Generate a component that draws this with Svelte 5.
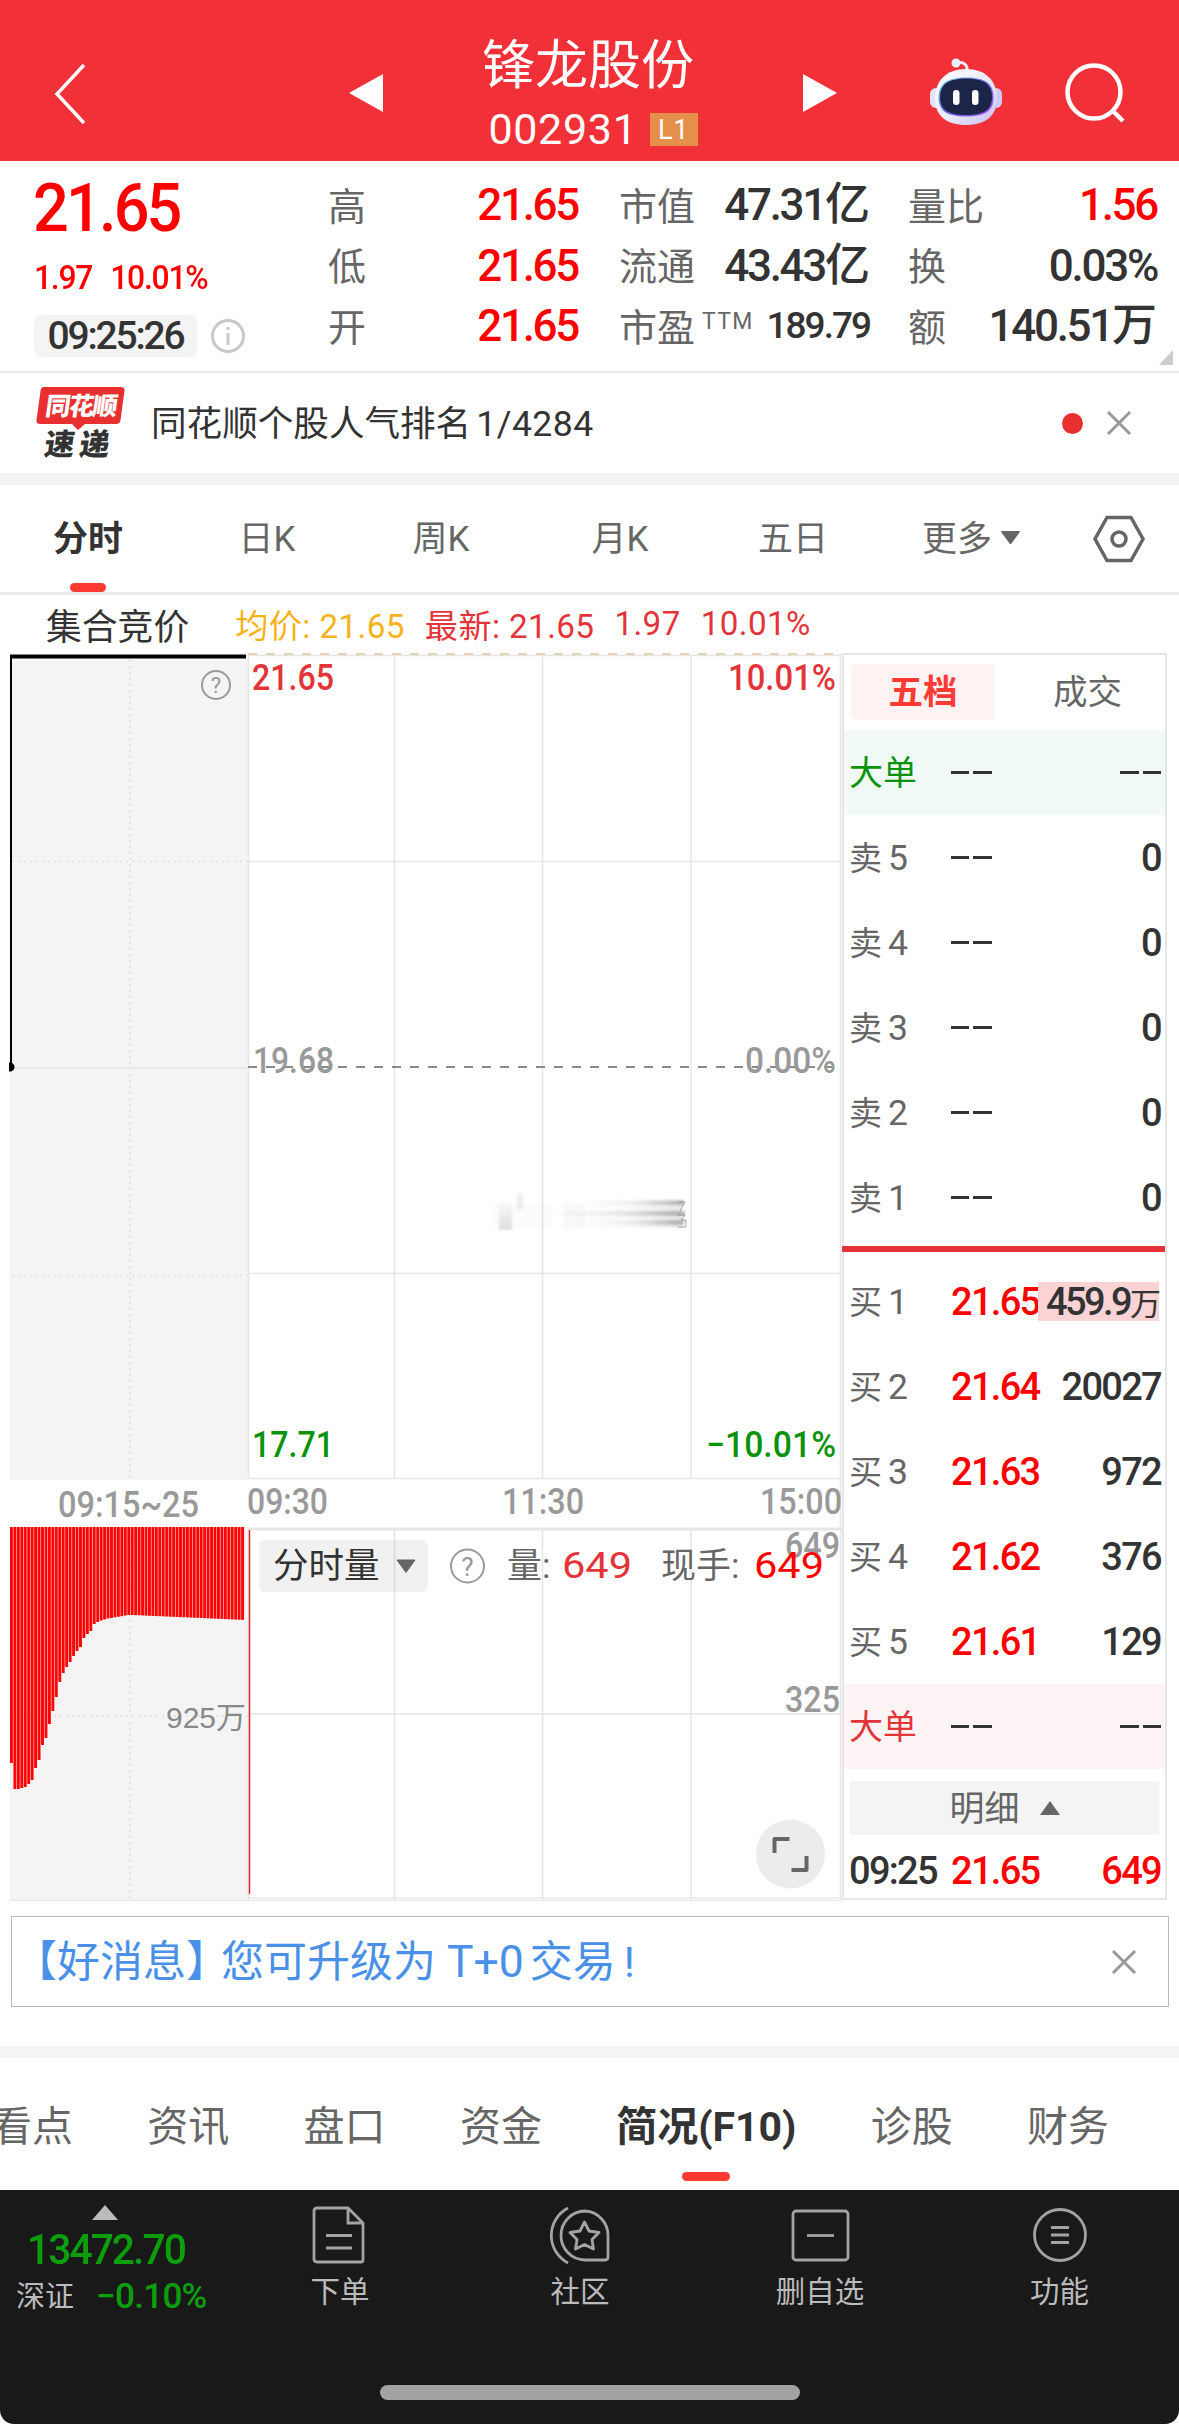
<script lang="ts">
  const stats = [
    [
      { label: '高', value: '21.65', tone: 'up' },
      { label: '低', value: '21.65', tone: 'up' },
      { label: '开', value: '21.65', tone: 'up' }
    ],
    [
      { label: '市值', value: '47.31', unit: '亿' },
      { label: '流通', value: '43.43', unit: '亿' },
      { label: '市盈', sup: 'TTM', value: '189.79', tone: 'small' }
    ],
    [
      { label: '量比', value: '1.56', tone: 'up' },
      { label: '换', value: '0.03%' },
      { label: '额', value: '140.51', unit: '万' }
    ]
  ];

  const periods = ['分时', '日K', '周K', '月K', '五日'];
  let period = $state('分时');

  const asks = [5, 4, 3, 2, 1];
  const bids = [
    { n: 1, price: '21.65', vol: '459.9', unit: '万' },
    { n: 2, price: '21.64', vol: '20027' },
    { n: 3, price: '21.63', vol: '972' },
    { n: 4, price: '21.62', vol: '376' },
    { n: 5, price: '21.61', vol: '129' }
  ];

  const sections = ['看点', '资讯', '盘口', '资金', '简况(F10)', '诊股', '财务'];
  let section = $state('简况(F10)');

  // call auction volume, one bar per sample, hanging from the top edge
  const ramp = [
    236, 262, 262, 261, 260, 257, 253, 241, 233, 218, 211, 197, 184, 170, 155, 146, 140, 135, 129,
    124, 120, 111, 107, 104, 97, 95, 93.5, 92.5, 91.5, 91, 90.3, 89.7, 89.2, 88.5, 88
  ];
  const auction = Array.from({ length: 68 }, (_, i) =>
    i < ramp.length ? ramp[i] : 88 + ((i - ramp.length) * 5) / 33
  );
</script>

{#snippet label(x: number, y: number, width: number, text: string, cls = '')}
  <text class={cls} {x} {y} textLength={width} lengthAdjust="spacingAndGlyphs">{text}</text>
{/snippet}

<div class="page">
  <header class="top">
    <svg class="back" width="40" height="64" viewBox="0 0 40 64"><path d="M34 3 7 32l27 29" /></svg>
    <svg class="tri" width="34" height="38" viewBox="0 0 34 38"><path d="M34 0v38L0 19z" /></svg>
    <div class="name">
      <h1>锋龙股份</h1>
      <div class="code"><span>002931</span><b>L1</b></div>
    </div>
    <svg class="tri" width="34" height="38" viewBox="0 0 34 38"><path d="M0 0v38l34-19z" /></svg>
    <svg class="robot" width="74" height="72" viewBox="0 0 74 72">
      <defs>
        <linearGradient id="shell" x1="0" y1="0" x2="1" y2="1">
          <stop offset="0" stop-color="#fff" />
          <stop offset=".55" stop-color="#e9eafb" />
          <stop offset="1" stop-color="#c3bdf3" />
        </linearGradient>
        <linearGradient id="rim" x1="0" y1="0" x2="1" y2="1">
          <stop offset="0" stop-color="#7fe3f4" />
          <stop offset=".5" stop-color="#6c63e8" />
          <stop offset="1" stop-color="#a14bf0" />
        </linearGradient>
      </defs>
      <path d="M27 6c8-2 12 2 11 9" fill="none" stroke="#f3effa" stroke-width="3" />
      <circle cx="27" cy="6" r="4.500" fill="#e6effa" />
      <rect x="1" y="31" width="14" height="20" rx="6" fill="#e3e3f8" />
      <rect x="59" y="31" width="14" height="20" rx="6" fill="#cfcaf4" />
      <path d="M37 12c20 0 31 12 31 30 0 17-12 26-31 26S6 59 6 42c0-18 11-30 31-30z" fill="url(#shell)" />
      <path d="M37 20.500c19 0 27.500 6 27.500 20 0 13-8 19-27.500 19s-27.500-6-27.500-19c0-14 8.500-20 27.500-20z" fill="url(#rim)" />
      <path d="M37 21.500c18 0 26 6 26 18.500 0 12.500-7.500 18-26 18s-26-5.500-26-18c0-12.500 8-18.500 26-18.500z" fill="#1c2547" />
      <rect x="24" y="33" width="6.500" height="15" rx="3.200" fill="#fff" />
      <rect x="43" y="33" width="6.500" height="15" rx="3.200" fill="#fff" />
    </svg>
    <svg class="search" width="62" height="62" viewBox="0 0 62 62">
      <circle cx="30" cy="29" r="26.500" /><path d="m48 47 11 11" />
    </svg>
  </header>

  <section class="quote">
    <div class="last">
      <div class="price num">21.65</div>
      <div class="change num"><span>1.97</span><span>10.01%</span></div>
      <div class="clock">
        <span class="pill num">09:25:26</span>
        <svg width="38" height="38" viewBox="0 0 38 38" fill="none" stroke="#c8c8c8" stroke-width="3">
          <circle cx="19" cy="19" r="15.500" /><path d="M19 10v3M19 16v12" />
        </svg>
      </div>
    </div>
    {#each stats as col}
      <dl>
        {#each col as s}
          <div class="stat">
            <dt>{s.label}{#if s.sup}<sup>{s.sup}</sup>{/if}</dt>
            <dd class="num {s.tone ?? ''}">{s.value}{#if s.unit}<i>{s.unit}</i>{/if}</dd>
          </div>
        {/each}
      </dl>
    {/each}
    <svg class="corner" width="14" height="15" viewBox="0 0 14 15"><path d="M14 0v15H0z" /></svg>
  </section>

  <section class="express">
    <div class="logo">
      <svg width="90" height="44" viewBox="0 0 90 44">
        <path d="M8 0h77q4 0 3.500 4l-4 29q-.5 4-4.500 4H49l-7 6-6-6H4q-4 0-3.500-4l4-29Q5 0 8 0z" fill="#e93030" />
      </svg>
      <span class="brand">同花顺</span>
      <span class="sub">速递</span>
    </div>
    <p>同花顺个股人气排名<span>1/4284</span></p>
    <i class="dot"></i>
    <svg class="x" width="26" height="26" viewBox="0 0 26 26"><path d="m2 2 22 22M24 2 2 24" /></svg>
  </section>

  <nav class="periods">
    {#each periods as p}
      <button class:active={p === period} onclick={() => (period = p)}>{p}</button>
    {/each}
    <button class="more">更多<svg width="19" height="13" viewBox="0 0 19 13"><path d="M1 0h17q1.500 0 .5 1.500l-8 11q-1 1-2 0l-8-11Q-.5 0 1 0z" /></svg></button>
    <svg class="hex" width="54" height="50" viewBox="0 0 54 50">
      <path d="M15 3.500h24L51 25 39 46.500H15L3 25z" /><circle cx="27" cy="25" r="7" />
    </svg>
  </nav>

  <div class="legend">
    <span class="title">集合竞价</span>
    <span class="avg">均价: 21.65</span>
    <span>最新: 21.65</span>
    <span>1.97</span>
    <span>10.01%</span>
  </div>

  <main>
    <svg class="chart" width="842" height="1248" viewBox="0 653 842 1248">
      <!-- auction price panel -->
      <rect x="10" y="655" width="238" height="825" fill="#f4f4f4" />
      <path class="dots" d="M130 660v818M12 861.500h236M12 1275.500h236" />
      <path class="grid" d="M12 1068h236" />
      <!-- main price grid -->
      <path class="grid" d="M248.500 655v824M394.500 655v824M542.500 655v824M691 655v824M840.500 653v1247M248 655.500h592M248 861.500h592M248 1273.500h592M248 1478.500h592" />
      <path d="M248 654h592" stroke="#dcc49c" stroke-width="1.500" stroke-dasharray="9 9" />
      <path d="M248 1067h592" stroke="#8a8a8a" stroke-width="2" stroke-dasharray="9 9" />
      <path d="M11 1067V657h235" fill="none" stroke="#000" stroke-width="2" />
      <path d="M10 656.500h236" stroke="#000" stroke-width="4" />
      <path d="M10 1063.500a3.500 3.500 0 0 1 0 7z" stroke="#000" stroke-width="2" />
      <circle class="ask" cx="216" cy="685" r="14" />
      <text class="q" x="216" y="693" font-size="22">?</text>

      <g class="axis">
        {@render label(252, 690, 82, '21.65', 'red')}
        {@render label(728, 690, 108, '10.01%', 'red')}
        {@render label(253, 1073, 81, '19.68')}
        {@render label(745, 1073, 91, '0.00%')}
        {@render label(252, 1457, 82, '17.71', 'green')}
        {@render label(706, 1457, 130, '−10.01%', 'green')}
        {@render label(58, 1517, 141, '09:15~25')}
        {@render label(247, 1514, 81, '09:30')}
        {@render label(502, 1514, 82, '11:30')}
        {@render label(760, 1514, 82, '15:00')}
      </g>

      <!-- faded trace -->
      <defs>
        <linearGradient id="trace"><stop offset="0" stop-color="#888" stop-opacity="0" /><stop offset=".5" stop-color="#888" stop-opacity=".12" /><stop offset="1" stop-color="#777" stop-opacity=".5" /></linearGradient>
        <linearGradient id="haze" x1="0" y1="0" x2="0" y2="1"><stop offset="0" stop-color="#999" stop-opacity="0" /><stop offset="1" stop-color="#999" stop-opacity=".3" /></linearGradient>
        <filter id="soft"><feGaussianBlur stdDeviation="1.200" /></filter>
      </defs>
      <g fill="url(#trace)" filter="url(#soft)">
        <rect x="499" y="1200" width="13" height="30" fill="url(#haze)" />
        <rect x="517" y="1193" width="6" height="16" fill="#999" opacity=".16" />
        <rect x="492" y="1204" width="60" height="24" fill="#999" opacity=".04" />
        <rect x="563" y="1203" width="22" height="26" fill="#999" opacity=".06" />
        <rect x="590" y="1200" width="94" height="5" />
        <rect x="540" y="1211" width="145" height="5" />
        <rect x="590" y="1220" width="94" height="5" />
        <rect x="570" y="1202" width="112" height="26" opacity=".35" />
      </g>
      <path d="M679 1202h6l-5 9M678 1215h7l-4 5h5v7h-8" fill="none" stroke="#888" opacity=".7" />

      <!-- volume -->
      <rect x="10" y="1527" width="238" height="374" fill="#f4f4f4" />
      <path class="dots" d="M130 1530v370M12 1716h236" />
      <path class="grid" d="M248.500 1528v372M394.500 1530v370M542.500 1530v370M691 1530v370M248 1714h592M10 1900.500h832M248 1898h592" />
      <path d="M248 1529h594" stroke="#e6e6e6" stroke-width="3" />
      {#each auction as h, i}
        <rect x={10 + i * 3.45} y="1527" width="2.900" height={h} fill="#fa0505" />
      {/each}
      <path d="M249.500 1530v364" stroke="#e02a2a" stroke-width="1.500" />
      <text class="cap" x="166" y="1728" textLength="80">925万</text>

      <rect x="259" y="1540" width="169" height="52" rx="6" fill="#000" fill-opacity=".055" />
      <text class="cn dark" x="273" y="1578" font-size="35.500">分时量</text>
      <path d="M397 1560h18l-9 12.500z" fill="#666" stroke="#666" stroke-linejoin="round" />
      <circle class="ask" cx="467.500" cy="1566" r="16.500" />
      <text class="q" x="467.500" y="1575.500" font-size="26">?</text>
      <g class="axis">
        {@render label(785, 1558, 55, '649')}
        {@render label(785, 1712, 55, '325')}
      </g>
      <text class="cn" x="507" y="1578" font-size="35">量:</text>
      {@render label(562, 1578, 70, '649', 'val red')}
      <text class="cn" x="661" y="1578" font-size="35">现手:</text>
      {@render label(754, 1578, 70, '649', 'val hot')}

      <circle cx="790.500" cy="1854" r="34.500" fill="#ececec" />
      <path d="M774.500 1853v-14h15M806.500 1856v14h-15" fill="none" stroke="#666" stroke-width="4" stroke-linejoin="round" />
    </svg>

    <aside class="book">
      <div class="switch"><b>五档</b><span>成交</span></div>
      <div class="row big sell"><span class="side">大单</span><i class="dash"></i><i class="dash"></i></div>
      {#each asks as n}
        <div class="row"><span class="side">卖<em>{n}</em></span><i class="dash"></i><span class="vol num">0</span></div>
      {/each}
      <div class="split"></div>
      {#each bids as b}
        <div class="row">
          <span class="side">买<em>{b.n}</em></span>
          <span class="up num">{b.price}</span>
          <span class="vol num" class:heavy={b.unit}>{b.vol}{#if b.unit}<i>{b.unit}</i>{/if}</span>
        </div>
      {/each}
      <div class="row big buy"><span class="side">大单</span><i class="dash"></i><i class="dash"></i></div>
      <div class="detail"><span>明细</span><svg width="20" height="14" viewBox="0 0 20 14"><path d="M10 0 20 14H0z" /></svg></div>
      <div class="row tick">
        <span class="num">09:25</span><span class="up num">21.65</span><span class="vol up num">649</span>
      </div>
    </aside>
  </main>

  <section class="notice">
    <p><span class="lead">【好消息】</span>您可升级为<span class="t0">T+0</span>交易<span class="bang">!</span></p>
    <svg class="x" width="26" height="26" viewBox="0 0 26 26"><path d="m2 2 22 22M24 2 2 24" /></svg>
  </section>

  <nav class="sections">
    {#each sections as s}
      <button class:active={s === section} onclick={() => (section = s)}>{s}</button>
    {/each}
  </nav>

  <footer>
    <div class="index">
      <svg width="26" height="15" viewBox="0 0 26 15"><path d="M13 0 26 15H0z" fill="#bbb" /></svg>
      <div class="level num">13472.70</div>
      <div class="delta">深证<span class="num">−0.10%</span></div>
    </div>
    <div class="item">
      <svg width="60" height="60" viewBox="0 0 60 60">
        <path d="M8 3h30l15 15v37q0 2-2 2H7q-3 0-3-3V6q0-3 3-3zM38 3v15h15M16 30.500h26M16 43h26" />
      </svg>
      <span>下单</span>
    </div>
    <div class="item">
      <svg width="62" height="60" viewBox="0 0 62 60">
        <path d="M19 3a31 31 0 0 0 0 55" />
        <path d="M36 6a24 24.500 0 1 0 0 49h20q3 0 3-3V31A24 24.500 0 0 0 36 6z" />
        <path d="m35.500 17 4.500 9 10 1.500-7 7 1.500 9.500-9-4.500-9 4.500 1.500-9.500-7-7L31 26z" stroke-linejoin="round" />
      </svg>
      <span>社区</span>
    </div>
    <div class="item">
      <svg width="60" height="60" viewBox="0 0 60 60"><rect x="3" y="6" width="55" height="49" rx="3" /><path d="M17 30.500h27" /></svg>
      <span>删自选</span>
    </div>
    <div class="item">
      <svg width="60" height="60" viewBox="0 0 60 60"><circle cx="30" cy="30" r="25.500" /><path d="M21 22.500h18M21 30h18M21 37.500h18" /></svg>
      <span>功能</span>
    </div>
    <i class="home"></i>
  </footer>
</div>

<style>
  :global(body) { background: #fff; }
  .page { width: 1179px; height: 2424px; overflow: hidden; font-family: Roboto, "Noto Sans CJK SC", sans-serif; color: #333; font-size: 36px; }
  .page * { box-sizing: border-box; }
  h1, p, dl, dd, sup { margin: 0; font-weight: 400; }
  i, em { font-style: normal; }
  svg { display: block; flex: none; }
  button { border: 0; background: none; padding: 0; font: inherit; color: #666; }
  .num { font-weight: 500; }
  .up { color: #f00; }

  .top { height: 161px; background: #f23038; display: grid; grid-template-columns: 50px 299px 34px 420px 34px 92px 74px 60px 1fr; color: #fff; }
  .back { grid-column: 2; margin-top: 62px; fill: none; stroke: #fff; stroke-width: 3.5; }
  .tri { margin-top: 74px; fill: #fff; }
  .name { text-align: center; padding-top: 34px; }
  .name h1 { font-size: 53px; line-height: 64px; padding-right: 10px; }
  .code { display: flex; justify-content: center; align-items: center; gap: 12px; font-size: 43px; line-height: 62px; letter-spacing: .7px; }
  .code b { width: 48px; height: 33px; background: #e5904a; font-size: 27px; font-weight: 400; line-height: 34px; }
  .robot { grid-column: 7; margin-top: 57px; }
  .search { grid-column: 9; margin-top: 63px; margin-left: 1px; fill: none; stroke: #fff; stroke-width: 4.5; }

  .quote { position: relative; height: 212px; border-bottom: 2px solid #ebebeb; display: grid; grid-template-columns: 292px 250px 251px 249px; padding-left: 36px; }
  .last { color: #f00; }
  .price { font-size: 67px; line-height: 70px; padding-top: 12px; margin-left: -3px; letter-spacing: -3px; transform: scaleX(.94); transform-origin: 0 0; }
  .change { display: flex; gap: 19px; font-size: 33.5px; line-height: 40px; margin: 15px 0 0 -2px; letter-spacing: -1.3px; transform: scaleX(.95); transform-origin: 0 0; }
  .clock { display: flex; align-items: center; gap: 12px; margin: 17px 0 0 -2px; }
  .pill { width: 163px; height: 42px; line-height: 42px; background: #f4f4f4; border-radius: 8px; color: #333; font-size: 39px; text-align: center; letter-spacing: -2.2px; }
  dl { padding-top: 14px; }
  dl:nth-of-type(2) { margin-left: 41px; margin-right: -41px; }
  dl:nth-of-type(3) { margin-left: 79px; margin-right: -79px; }
  .stat { height: 60.5px; display: flex; justify-content: space-between; align-items: center; white-space: nowrap; }
  dt { color: #666; font-size: 38px; display: flex; align-items: center; padding-bottom: 4px; }
  sup { font-size: 23px; line-height: 30px; margin: 0 0 4px 7px; letter-spacing: 1.3px; vertical-align: baseline; }
  dd { font-size: 44px; line-height: 60px; letter-spacing: -2.3px; }
  dd i { font-size: 45px; letter-spacing: 0; }
  dd.small { font-size: 37px; letter-spacing: -2px; }
  .corner { position: absolute; right: 6px; bottom: 6px; fill: #ccc; }

  .express { height: 112px; border-bottom: 12px solid #f4f4f4; display: flex; align-items: center; padding: 0 47px 0 36px; }
  .logo { position: relative; width: 115px; height: 72px; font-family: "Noto Sans CJK SC", sans-serif; font-weight: 900; white-space: nowrap; }
  .brand { position: absolute; left: 10px; top: -1px; font-size: 25px; line-height: 37px; color: #fff; transform: skewX(-8deg); letter-spacing: -1.5px; }
  .sub { position: absolute; left: 9px; top: 39px; font-size: 30px; line-height: 32px; transform: skewX(-8deg); letter-spacing: 5px; }
  .express p { flex: 1; font-size: 35.6px; padding-bottom: 6px; }
  .express p span { margin-left: 5px; letter-spacing: .5px; }
  .dot { width: 21px; height: 21px; border-radius: 50%; background: #e93030; margin-right: 23px; }
  .x { fill: none; stroke: #999; stroke-width: 3; }

  .periods { height: 110px; border-bottom: 3px solid #ebebeb; display: grid; grid-template-columns: 176px 182px 166px 192px 154px 202px 94px; align-items: stretch; }
  .periods button { position: relative; font-size: 35px; padding-bottom: 6px; }
  .active { font-weight: 700; color: #333; }
  .active::after { content: ""; position: absolute; left: 50%; bottom: 0; width: 36px; height: 9px; margin-left: -18px; border-radius: 4.5px; background: #fd3a32; }
  .periods .more { display: flex; align-items: center; justify-content: center; gap: 9px; }
  .more svg { fill: #666; margin-top: 4px; }
  .hex { align-self: center; justify-self: center; fill: none; stroke: #666; stroke-width: 3.5; }

  .legend { height: 57px; padding-left: 46px; display: flex; align-items: center; gap: 20px; font-size: 33.2px; letter-spacing: .4px; color: #e33439; }
  .legend .title { font-size: 35.8px; letter-spacing: 0; color: #333; margin-right: 26px; }
  .legend .avg { color: #f8b31c; }

  main { display: flex; height: 1248px; margin-top: 1px; }
  .grid { fill: none; stroke: #e6e6e6; stroke-width: 1.6; }
  .dots { fill: none; stroke: #e2e2e2; stroke-width: 2; stroke-dasharray: 2 4; }
  .ask { fill: none; stroke: #999; stroke-width: 2; }
  .q { fill: #999; text-anchor: middle; }
  .axis text { font-size: 36px; font-weight: 500; fill: #999; }
  .red, .axis .red { fill: #e33439; }
  .axis .green { fill: #0a930a; }
  .hot { fill: #f00; }
  .val { font-size: 36.5px; font-weight: 400; }
  .cn { fill: #666; }
  .dark { fill: #333; }
  .cap { font-family: "Liberation Sans", "Noto Sans CJK SC", sans-serif; font-size: 30px; fill: #888; }

  .book { width: 325px; height: 1247px; border: 2px solid #e6e6e6; }
  .switch { height: 75px; padding: 9px 7px; display: grid; grid-template-columns: 144px 1fr; line-height: 56px; font-size: 34.5px; text-align: center; color: #666; }
  .switch b { background: #fff2f2; color: #fd3a33; border-radius: 5px; height: 56px; font-weight: 700; }
  .switch span { padding-left: 22px; }
  .row { height: 85px; padding: 0 4px 0 5px; display: grid; grid-template-columns: 102px 84px 1fr; align-items: center; color: #666; font-size: 33px; white-space: nowrap; }
  .side { padding-bottom: 4px; }
  .row em { font-size: 35.5px; margin-left: 6px; }
  .row > .num { font-size: 38px; letter-spacing: -1.7px; }
  .vol { justify-self: end; color: #333; }
  .up, .vol.up { color: #f00; }
  .vol i { font-size: 31px; letter-spacing: 0; font-weight: 400; }
  .row > .heavy { background: linear-gradient(#fbd3d5, #fbd3d5) no-repeat 0 50% / 121px 39px; padding-left: 8px; letter-spacing: -2.6px; }
  .big { font-size: 34px; }
  .sell { background: #f1faf6; color: #0a930a; }
  .buy { background: #fff4f5; color: #e33439; }
  .dash { width: 41px; height: 3.5px; background: linear-gradient(90deg, #333 18.5px, transparent 18.5px 22.5px, #333 22.5px); }
  .dash:nth-child(3) { justify-self: end; }
  .split { height: 6px; background: #e33439; margin: 6px 0 7px -2px; }
  .detail { height: 54px; margin: 12px 6px 0; background: #f4f4f4; display: flex; align-items: center; justify-content: center; gap: 20px; color: #666; font-size: 35px; }
  .detail span { padding-bottom: 5px; }
  .detail svg { fill: #666; }
  .tick { height: 62px; margin-top: 5px; }
  .tick .num:first-child { color: #333; }

  .notice { margin: 15px 10px 0 11px; height: 91px; border: 1.5px solid #bbb; display: flex; justify-content: space-between; align-items: center; padding: 0 31px 0 2px; color: #4a90e8; font-size: 43px; }
  .notice p { padding-bottom: 7px; }
  .lead { margin-right: -8px; }
  .t0 { margin: 0 6px 0 11px; font-size: 44.5px; }
  .bang { margin-left: 8px; }

  .sections { margin-top: 39px; height: 144px; border-top: 12px solid #f4f4f4; display: flex; gap: 74.3px; }
  .sections button { position: relative; font-size: 41px; white-space: nowrap; flex: none; padding-bottom: 3px; }
  .sections button:first-child { margin-left: -9px; }
  .sections .active { color: #333; }
  .sections .active::after { width: 48px; margin-left: -24px; bottom: 9px; }

  footer { height: 234px; background: #191919; border-radius: 0 0 14px 14px; display: grid; grid-template-columns: 220px 240px 240px 240px 239px; grid-template-rows: 195px 15px; color: #bbb; font-size: 29px; }
  .index { padding: 15px 0 0 16px; }
  .index svg { margin-left: 76px; }
  .level { font-size: 42px; line-height: 50px; margin: 5px 0 0 11px; color: #0a9f0a; letter-spacing: -2px; transform: scaleX(.97); transform-origin: 0 0; }
  .delta { display: flex; align-items: center; line-height: 40px; margin-top: 2px; }
  .delta span { color: #0a9f0a; margin-left: 22px; font-size: 35px; letter-spacing: -.7px; }
  .item { display: flex; flex-direction: column; align-items: center; padding-top: 15px; }
  .item span { line-height: 40px; margin-top: 7px; font-size: 29.5px; }
  .item svg { fill: none; stroke: #a3a3a3; stroke-width: 2.8; }
  .home { grid-column: 1 / -1; justify-self: center; width: 420px; height: 15px; border-radius: 8px; background: #a3a3a3; }
</style>
